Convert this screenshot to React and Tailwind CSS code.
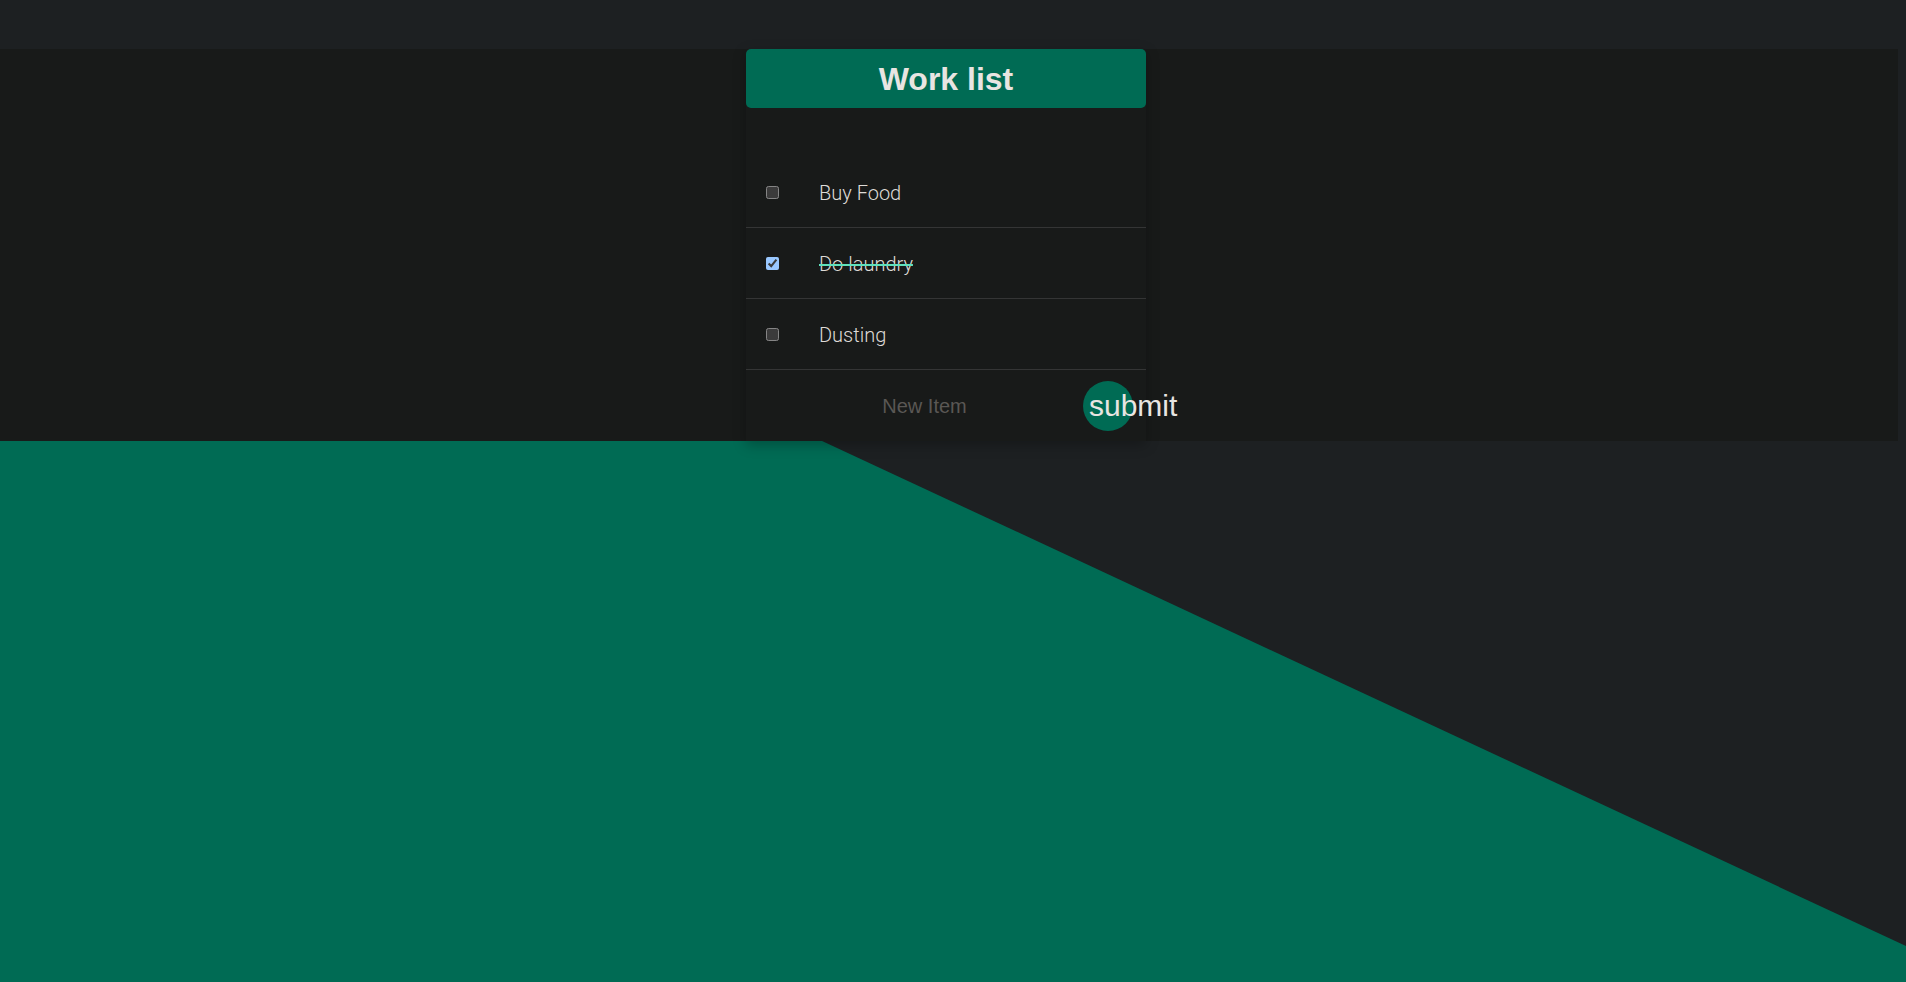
import { useState } from "react";

const items = [
  { id: 1, text: "Buy Food", done: false },
  { id: 2, text: "Do laundry", done: true },
  { id: 3, text: "Dusting", done: false },
];

export default function App() {
  const [list, setList] = useState(items);

  const toggle = (id) =>
    setList(list.map((it) => (it.id === id ? { ...it, done: !it.done } : it)));

  return (
    <div className="w-full h-[982px] overflow-hidden bg-[#1d2022] flex flex-col font-['Liberation_Sans',Arial,sans-serif]">
      <div className="h-[49px] shrink-0" />

      {/* dark band with the card */}
      <div className="w-[1898px] h-[392px] shrink-0 bg-[#181a19] flex justify-center pr-[6px]">
        <div className="w-[400px] relative z-10 shadow-[0_4px_12px_rgba(0,0,0,0.25)]">
          <div className="h-[59px] rounded-[5px] bg-[#006b54] flex items-center justify-center">
            <h1 className="text-[32px] font-bold text-[#e8e5e2]">Work list</h1>
          </div>

          <div className="mt-[49px]">
            {list.map((it) => (
              <div
                key={it.id}
                className="h-[71px] border-b border-[#343535] flex items-center pl-[20px]"
              >
                <input
                  type="checkbox"
                  checked={it.done}
                  onChange={() => toggle(it.id)}
                  className="w-[13px] h-[13px] m-0 [color-scheme:dark]"
                />
                <p
                  className={
                    "ml-[40px] pt-[2px] text-[20px] font-light text-[#dedbd7] font-['Roboto',sans-serif] " +
                    (it.done ? "line-through decoration-[#5fe0bb] decoration-[2px]" : "")
                  }
                >
                  {it.text}
                </p>
              </div>
            ))}

            <form className="h-[71px] flex items-center pl-[20px] pr-[13px]">
              <input
                type="text"
                placeholder="New Item"
                className="flex-1 min-w-0 bg-transparent text-center text-[20px] text-[#dedbd7] placeholder:text-[#5a5754] outline-none"
              />
              <button
                type="button"
                className="w-[50px] h-[50px] shrink-0 rounded-full bg-[#006b54] flex items-center justify-start pl-[6px] overflow-visible whitespace-nowrap text-[30px] text-[#e8e5e2]"
              >
                submit
              </button>
            </form>
          </div>
        </div>
      </div>

      {/* green slanted background */}
      <div className="h-[541px] w-full shrink-0 bg-[#006b54] [clip-path:polygon(0_0,43.13%_0,100%_93.35%,100%_100%,0_100%)]" />
    </div>
  );
}
